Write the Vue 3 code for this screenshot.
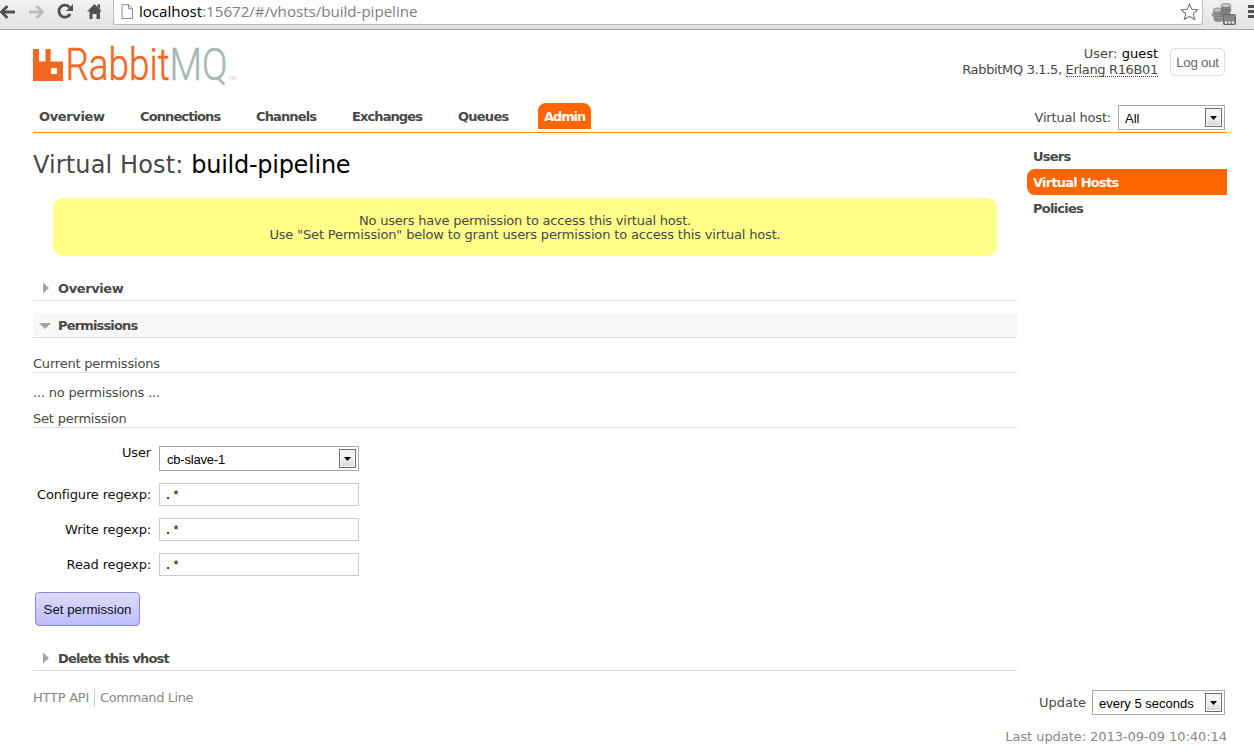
<script setup>
const tabs = [
  { name: 'Overview', w: 65, gap: 36, ls: -0.35 },
  { name: 'Connections', w: 80, gap: 36, ls: -0.89 },
  { name: 'Channels', w: 60, gap: 36, ls: -0.87 },
  { name: 'Exchanges', w: 70, gap: 36, ls: -0.9 },
  { name: 'Queues', w: 50, gap: 30, ls: -0.75 }
]
const fields = ['Configure regexp:', 'Write regexp:', 'Read regexp:']
</script>

<template>
  <div class="page">
    <div class="toolbar">
      <svg class="nav-icons" width="113" height="29" viewBox="1 0 113 29">
        <g fill="none" stroke-width="2.8">
          <path d="M16 12H2.500M8.500 6L2.500 12L8.500 18" stroke="#505050" />
          <path d="M30 12H43M37.500 6L43.500 12L37.500 18" stroke="#bcbcbc" />
          <path d="M70.600 7.400A6 6 0 1 0 71.200 14" stroke="#505050" />
        </g>
        <path d="M74 4V11H67Z" fill="#505050" />
        <path d="M95.500 4L103 11.500H101V19H97.500V14H93.500V19H90.500V11.500H88ZM98.500 4.500H101V9L98.500 6.500Z" fill="#505050" />
      </svg>
      <div class="address">
        <svg class="doc" width="13" height="16" viewBox="0 0 13 16">
          <path d="M1 .7H7.500L11.500 4.700V14.500H1ZM7.500 .7V4.700H11.500" fill="#fff" stroke="#8a8a8a" />
        </svg>
        <span class="url"><b>localhost</b>:15672/#/vhosts/build-pipeline</span>
        <svg class="star" width="19" height="18" viewBox="0 0 19 18">
          <path d="M9.500 1.200L11.800 6.300L17.800 6.900L13.300 10.800L14.600 16.500L9.500 13.500L4.400 16.500L5.700 10.800L1.200 6.900L7.200 6.300Z" fill="#fff" stroke="#777" stroke-width="1.100" />
        </svg>
      </div>
      <svg class="ext" width="51" height="29" viewBox="-1 0 51 29">
        <g stroke="#666" stroke-width=".6">
          <g fill="#999">
            <ellipse cx="15" cy="19.500" rx="5" ry="2" /><ellipse cx="15" cy="17.500" rx="5" ry="2" />
            <ellipse cx="13" cy="15" rx="5" ry="2" /><ellipse cx="14" cy="12.500" rx="5" ry="2" /><ellipse cx="14" cy="10" rx="5" ry="2" fill="#c8c8c8" />
          </g>
          <g fill="#888">
            <ellipse cx="22" cy="15" rx="5" ry="2" /><ellipse cx="21" cy="12.700" rx="5" ry="2" /><ellipse cx="22" cy="10.300" rx="5" ry="2" />
            <ellipse cx="22" cy="8" rx="5" ry="2" /><ellipse cx="22" cy="5.500" rx="5" ry="2" fill="#c8c8c8" />
          </g>
        </g>
        <rect x="19.500" y="14.500" width="12" height="10" rx="1" fill="#858585" stroke="#666" />
        <path d="M21 22.500H23M24.500 22.500H26.500M28 22.500H30" stroke="#fff" stroke-width="1.800" />
        <path d="M44 6.500H50M44 11.500H50M44 16.500H50" stroke="#505050" stroke-width="3" />
      </svg>
    </div>

    <div class="content">
      <header class="head">
        <svg class="logo" width="206" height="38" viewBox="0 0 206 38">
          <path d="M1 4H5.500Q6 4 6 4.500V16.500H12.500V4.500Q12.500 4 13 4H17Q17.600 4 17.600 4.500V16.500H29.500Q30 16.500 30 17V36H0V4.500Q0 4 1 4ZM19 23Q18 23 18 24V28Q18 29 19 29H23Q24 29 24 28V24Q24 23 23 23Z" fill="#f26722" fill-rule="evenodd" />
          <text class="wordmark" x="32.500" y="35" textLength="104" lengthAdjust="spacingAndGlyphs" fill="#f26722" stroke="#f26722">Rabbit</text>
          <text class="wordmark" x="136.500" y="35" textLength="58" lengthAdjust="spacingAndGlyphs" fill="#a9b7b1" stroke="#a9b7b1">MQ</text>
          <text class="tm" x="195" y="35" textLength="8" lengthAdjust="spacingAndGlyphs">TM</text>
        </svg>
        <div class="login">
          <div class="who">
            <div>User: <b>guest</b></div>
            <div class="version">RabbitMQ 3.1.5, <span class="erl">Erlang R16B01</span></div>
          </div>
          <button class="logout">Log out</button>
        </div>
      </header>

      <nav class="tabs">
        <a v-for="t in tabs" :key="t.name" :style="{ width: t.w + 'px', marginRight: t.gap + 'px', letterSpacing: t.ls + 'px' }">{{ t.name }}</a>
        <a class="active">Admin</a>
        <div class="vhost">
          <span class="vlabel">Virtual host:</span>
          <div class="select small"><span>All</span><i><svg width="7" height="4"><path d="M0 0H7L3.500 4Z" /></svg></i></div>
        </div>
      </nav>

      <div class="columns">
        <main>
          <h1>Virtual Host: <b>build-pipeline</b></h1>
          <div class="notice"><span class="n1">No users have permission to access this virtual host.</span><br><span class="n2">Use "Set Permission" below to grant users permission to access this virtual host.</span></div>

          <h2 class="s1"><svg width="12" height="12"><path d="M4 0.500V11.500L10 6Z" /></svg><span class="ov">Overview</span></h2>
          <h2 class="s2 open"><svg width="12" height="12"><path d="M0 4H12L6 10Z" /></svg>Permissions</h2>
          <h3 class="s3">Current permissions</h3>
          <p>... no permissions ...</p>
          <h3 class="s4">Set permission</h3>

          <div class="form">
            <label class="user">User</label>
            <div class="select"><span class="slave">cb-slave-1</span><i><svg width="7" height="4"><path d="M0 0H7L3.500 4Z" /></svg></i></div>
            <template v-for="f in fields" :key="f">
              <label>{{ f }}</label>
              <div class="input">.*</div>
            </template>
          </div>
          <button class="submit">Set permission</button>
          <h2 class="s5"><svg width="12" height="12"><path d="M4 0.500V11.500L10 6Z" /></svg>Delete this vhost</h2>
        </main>
        <aside>
          <a>Users</a>
          <a class="active">Virtual Hosts</a>
          <a>Policies</a>
        </aside>
      </div>

      <footer>
        <div class="links"><a class="api">HTTP API</a><a class="cmd">Command Line</a></div>
        <div class="update">
          <div class="every"><span>Update</span><div class="select mid"><span>every 5 seconds</span><i><svg width="7" height="4"><path d="M0 0H7L3.500 4Z" /></svg></i></div></div>
          <div class="last">Last update: 2013-09-09 10:40:14</div>
        </div>
      </footer>
    </div>
  </div>
</template>

<style>
body { background: #fff; overflow: hidden; }
</style>

<style scoped>
* { box-sizing: border-box; }
.page { width: 1254px; height: 750px; overflow: hidden; font: 13px/16px Verdana, "DejaVu Sans", sans-serif; color: #484848; background: #fff; white-space: nowrap; }
.toolbar { display: flex; height: 30px; background: linear-gradient(#f2f2f2, #e2e2e2); border-bottom: 1px solid #a5a5a5; }
.nav-icons { flex: none; width: 113px; }
.address { display: flex; flex: none; width: 1090px; height: 25px; background: #fff; border: 1px solid #bcbcbc; border-top: 0; border-radius: 0 0 3px 3px; padding-left: 7px; }
.doc { margin-top: 4px; }
.ext { flex: none; }
.url { font: 15.2px/23px "Open Sans", sans-serif; color: #808080; margin-left: 5px; letter-spacing: -.05px; }
.url b { font-weight: 400; color: #000; }
.star { margin: 3px 3px 0 auto; }
.content { margin: 0 27px 0 33px; }
.head { display: flex; justify-content: space-between; height: 73px; padding-top: 15px; }
.logo { overflow: visible; }
.wordmark { font: 300 44px Roboto, sans-serif; stroke-width: .5px; }
.tm { font: 300 6px Roboto, sans-serif; fill: #a9b7b1; }
.login { display: flex; margin-right: 2px; }
.who { text-align: right; padding-top: 1px; margin-right: 12px; }
.who b { font-weight: 400; color: #000; }
.version { letter-spacing: -.34px; }
.erl { border-bottom: 1px dotted #444; display: inline-block; height: 15px; line-height: 16px; }
.logout { margin-top: 3px; width: 55px; height: 28px; background: #fff; border: 1px solid #ddd; border-radius: 5px; padding: 0; color: #666; font: 13.3px "Liberation Sans", Arial, sans-serif; letter-spacing: -.25px; }
.tabs { display: flex; height: 30px; border-bottom: 1px solid #ff9100; padding-left: 6px; font-weight: 700; line-height: 28px; }
.tabs a.active { width: 53px; height: 26px; padding-left: 6px; background: #f60; color: #fff; border-radius: 8px 8px 0 0; letter-spacing: -1.1px; }
.vhost { display: flex; margin: 2px 2px 0 auto; font-weight: 400; gap: 7px; line-height: 26px; }
.vlabel { letter-spacing: -.2px; }
.select { display: flex; justify-content: space-between; width: 200px; height: 25px; border: 1px solid #aaa; color: #000; padding: 2px 2px 0 7px; background: #fff; font: 13px/22px "Liberation Sans", Arial, sans-serif; }
.select i { display: flex; align-items: center; justify-content: center; width: 17px; height: 19px; background: linear-gradient(#f3f3f3 50%, #d4d4d4); border: 1px solid #6e6e6e; box-shadow: inset 0 0 0 1px #f6f6f6; }
.select.small { width: 107px; padding-left: 6px; }
.select.mid { width: 133px; padding-left: 6px; }
.slave { letter-spacing: -.2px; }
.columns { display: flex; gap: 10px; }
main { width: 984px; }
h1 { margin: 14px 0 0; font-size: 24px; line-height: 36px; height: 34px; font-weight: 400; letter-spacing: .13px; }
h1 b { font-weight: 400; color: #000; letter-spacing: -.27px; }
.notice { margin: 17px 20px 0; height: 58px; padding-top: 16px; border-radius: 10px; background: #ff8; text-align: center; line-height: 14px; }
.n1 { letter-spacing: -.21px; }
.n2 { letter-spacing: -.16px; }
h2 { display: flex; margin: 0; height: 25px; border-bottom: 1px solid #ddd; font-size: 13px; line-height: 26px; padding-left: 6px; gap: 7px; letter-spacing: -.85px; }
.ov { letter-spacing: -.4px; }
h2 svg { margin-top: 6px; fill: #a3a3a3; flex: none; }
.s1 { margin-top: 20px; }
.s2 { margin-top: 12px; }
.open { background: #f8f8f8; }
h3 { margin: 0; font-size: 13px; font-weight: 400; line-height: 20px; height: 19px; border-bottom: 1px solid #ddd; letter-spacing: -.21px; }
.s3 { margin-top: 16px; }
p { margin: 12px 0 0; line-height: 16px; height: 24px; letter-spacing: -.19px; }
.form { display: grid; grid-template-columns: 118px 200px; column-gap: 8px; row-gap: 12px; margin-top: 18px; color: #111; }
.form label { text-align: right; line-height: 23px; letter-spacing: -.15px; }
.form .user { line-height: 14px; }
.input { height: 23px; border: 1px solid #ccc; padding-left: 4px; color: #000; font: 13.3px/24px "Liberation Mono", monospace; }
.submit { display: block; margin: 16px 0 0 2px; width: 105px; height: 34px; border: 1px solid #88d; border-radius: 4px; padding: 0; background: linear-gradient(#ddf, #bbf); color: #111; font: 13.3px "Liberation Sans", Arial, sans-serif; }
.s5 { margin-top: 20px; }
aside { width: 200px; padding-top: 10px; }
aside a { display: block; height: 26px; padding-left: 6px; font-weight: 700; line-height: 28px; letter-spacing: -.77px; }
aside a.active { background: #f60; color: #fff; border-radius: 8px 0 0 8px; }
footer { display: flex; justify-content: space-between; color: #888; }
.links { display: flex; padding-top: 17px; line-height: 19px; height: 36px; letter-spacing: -.25px; }
.api { border-right: 1px solid #ccc; padding-right: 5px; margin-right: 5px; }
.cmd { letter-spacing: -.4px; }
.update { padding-top: 19px; }
.every { display: flex; justify-content: flex-end; gap: 6px; margin-right: 2px; color: #484848; line-height: 26px; }
.last { margin-top: 13px; text-align: right; letter-spacing: -.06px; }
</style>
